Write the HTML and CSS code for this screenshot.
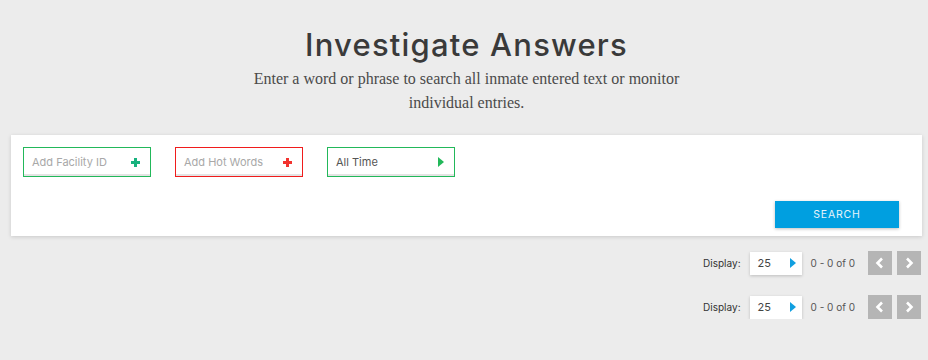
FILE: index.html
```html
<!DOCTYPE html>
<html lang="en">
<head>
  <meta charset="UTF-8" />
  <meta name="viewport" content="width=device-width, initial-scale=1" />
  <title>Investigate Answers</title>
  <link rel="stylesheet" href="styles.css">
</head>
<body>
  <main class="page">
    <header class="intro">
      <h1>Investigate Answers</h1>
      <p>Enter a word or phrase to search all inmate entered text or monitor<br>individual entries.</p>
    </header>

    <section class="search-card">
      <div class="filters">
        <div class="filter filter-green">
          <span class="placeholder">Add Facility ID</span>
          <span class="plus plus-green"></span>
        </div>
        <div class="filter filter-red">
          <span class="placeholder">Add Hot Words</span>
          <span class="plus plus-red"></span>
        </div>
        <div class="filter filter-green">
          <span class="value">All Time</span>
          <span class="arrow arrow-green"></span>
        </div>
      </div>
      <div class="actions">
        <button class="search-btn">SEARCH</button>
      </div>
    </section>

    <div class="pager">
      <span class="pager-label">Display:</span>
      <div class="pager-select"><span>25</span><span class="arrow arrow-blue"></span></div>
      <span class="pager-count">0 - 0 of 0</span>
      <button class="pager-btn" aria-label="Previous">
        <svg width="10" height="12" viewBox="0 0 10 12"><path d="M7 1.5 L2.5 6 L7 10.5" fill="none" stroke="#fff" stroke-width="2.6"/></svg>
      </button>
      <button class="pager-btn" aria-label="Next">
        <svg width="10" height="12" viewBox="0 0 10 12"><path d="M3 1.5 L7.5 6 L3 10.5" fill="none" stroke="#fff" stroke-width="2.6"/></svg>
      </button>
    </div>

    <div class="pager">
      <span class="pager-label">Display:</span>
      <div class="pager-select"><span>25</span><span class="arrow arrow-blue"></span></div>
      <span class="pager-count">0 - 0 of 0</span>
      <button class="pager-btn" aria-label="Previous">
        <svg width="10" height="12" viewBox="0 0 10 12"><path d="M7 1.5 L2.5 6 L7 10.5" fill="none" stroke="#fff" stroke-width="2.6"/></svg>
      </button>
      <button class="pager-btn" aria-label="Next">
        <svg width="10" height="12" viewBox="0 0 10 12"><path d="M3 1.5 L7.5 6 L3 10.5" fill="none" stroke="#fff" stroke-width="2.6"/></svg>
      </button>
    </div>
  </main>
</body>
</html>
```

FILE: styles.css
```css
/* Reset & base */
* {
  margin: 0;
  padding: 0;
  box-sizing: border-box;
}
html, body {
  background-color: #ececec;
  font-family: 'Inter', 'Liberation Sans', sans-serif;
  color: #333;
}
.page {
  padding: 0 6px 0 11px;
}
.intro {
  text-align: center;
  padding-top: 25px;
}
.intro h1 {
  font-size: 31px;
  font-weight: 500;
  line-height: 40px;
  color: #3a3a3a;
  letter-spacing: 1.2px;
}
.intro p {
  margin-top: 2px;
  font-family: 'Liberation Serif', Georgia, serif;
  font-size: 16px;
  line-height: 24px;
  color: #4a4a4a;
}
.search-card {
  margin-top: 20px;
  background: #fff;
  box-shadow: 0 1px 4px rgba(0, 0, 0, 0.15);
  padding: 12px 23px 8px 12px;
  height: 101px;
}
.filters {
  display: flex;
  gap: 24px;
}
.filter {
  width: 128px;
  height: 30px;
  display: flex;
  align-items: center;
  justify-content: space-between;
  padding: 0 10px 0 8px;
  border: 1px solid #22b85a;
  box-shadow: inset 0 -2px 0 #e4e4e4;
  font-size: 11px;
}
.filter-red {
  border-color: #f01c1c;
}
.placeholder {
  color: #a8a8a8;
}
.value {
  color: #555;
}
.plus {
  position: relative;
  width: 9px;
  height: 9px;
}
.plus::before, .plus::after {
  content: "";
  position: absolute;
  background: currentColor;
}
.plus::before {
  left: 3px;
  top: 0;
  width: 3px;
  height: 9px;
}
.plus::after {
  left: 0;
  top: 3px;
  width: 9px;
  height: 3px;
}
.plus-green {
  color: #18b27e;
}
.plus-red {
  color: #f2332f;
}
.arrow {
  width: 0;
  height: 0;
  border-top: 5px solid transparent;
  border-bottom: 5px solid transparent;
  border-left: 6px solid #22b85a;
}
.arrow-blue {
  border-left-color: #109fe0;
}
.actions {
  display: flex;
  justify-content: flex-end;
  margin-top: 24px;
}
.search-btn {
  width: 124px;
  height: 27px;
  border: none;
  background-color: #009fe0;
  color: #e6f4fb;
  font-family: 'Inter', 'Liberation Sans', sans-serif;
  font-size: 10.5px;
  letter-spacing: 0.8px;
  box-shadow: 0 1px 3px rgba(0, 0, 0, 0.25);
  cursor: pointer;
}
.pager {
  display: flex;
  justify-content: flex-end;
  align-items: center;
  margin-top: 15px;
  padding-right: 1px;
  height: 24px;
  font-size: 10px;
}
.pager + .pager {
  margin-top: 20px;
}
.pager-label {
  color: #333;
  margin-right: 9px;
}
.pager-select {
  width: 52px;
  height: 23px;
  background: #fff;
  box-shadow: 0 1px 3px rgba(0, 0, 0, 0.2);
  display: flex;
  align-items: center;
  justify-content: space-between;
  padding: 0 6px 0 8px;
  font-size: 11px;
  color: #444;
}
.pager-count {
  color: #555;
  margin: 0 13px 0 9px;
}
.pager-btn {
  width: 24px;
  height: 24px;
  border: none;
  background: #b5b5b5;
  display: flex;
  align-items: center;
  justify-content: center;
  cursor: pointer;
}
.pager-btn + .pager-btn {
  margin-left: 5px;
}
```
